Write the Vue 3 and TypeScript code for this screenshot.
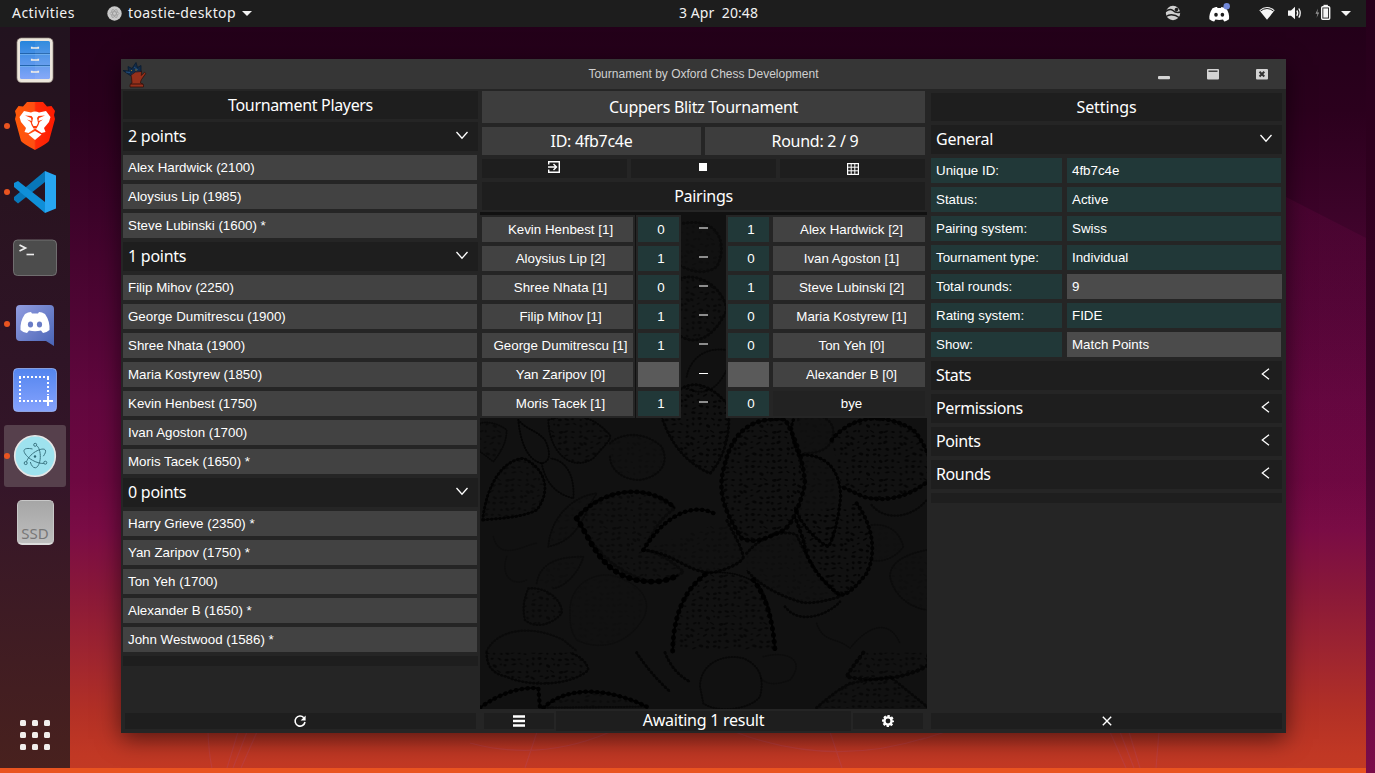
<script setup lang="ts">
interface Group { title: string; players: string[] }
interface Pairing { white: string; ws: string; bs: string; black: string; open?: boolean; bye?: boolean }
interface Setting { label: string; value: string; kind?: string }

const groups: Group[] = [
  { title: '2 points', players: ['Alex Hardwick (2100)', 'Aloysius Lip (1985)', 'Steve Lubinski (1600) *'] },
  {
    title: '1 points',
    players: ['Filip Mihov (2250)', 'George Dumitrescu (1900)', 'Shree Nhata (1900)', 'Maria Kostyrew (1850)', 'Kevin Henbest (1750)', 'Ivan Agoston (1700)', 'Moris Tacek (1650) *'],
  },
  {
    title: '0 points',
    players: ['Harry Grieve (2350) *', 'Yan Zaripov (1750) *', 'Ton Yeh (1700)', 'Alexander B (1650) *', 'John Westwood (1586) *'],
  },
]

const pairings: Pairing[] = [
  { white: 'Kevin Henbest [1]', ws: '0', bs: '1', black: 'Alex Hardwick [2]' },
  { white: 'Aloysius Lip [2]', ws: '1', bs: '0', black: 'Ivan Agoston [1]' },
  { white: 'Shree Nhata [1]', ws: '0', bs: '1', black: 'Steve Lubinski [2]' },
  { white: 'Filip Mihov [1]', ws: '1', bs: '0', black: 'Maria Kostyrew [1]' },
  { white: 'George Dumitrescu [1]', ws: '1', bs: '0', black: 'Ton Yeh [0]' },
  { white: 'Yan Zaripov [0]', ws: '', bs: '', black: 'Alexander B [0]', open: true },
  { white: 'Moris Tacek [1]', ws: '1', bs: '0', black: 'bye', bye: true },
]

const settings: Setting[] = [
  { label: 'Unique ID:', value: '4fb7c4e' },
  { label: 'Status:', value: 'Active' },
  { label: 'Pairing system:', value: 'Swiss' },
  { label: 'Tournament type:', value: 'Individual' },
  { label: 'Total rounds:', value: '9', kind: 'edit wide' },
  { label: 'Rating system:', value: 'FIDE' },
  { label: 'Show:', value: 'Match Points', kind: 'edit' },
]

const sections: string[] = ['Stats', 'Permissions', 'Points', 'Rounds']

// Leaf outlines of the board wallpaper: d, edge weight, opacity, texture inside
interface Leaf { d: string; w: number; o: number; tex?: number }
const leaves: Leaf[] = [
  { d: 'M38 330 C50 220 100 150 160 145 C235 180 240 250 200 300 C150 325 80 325 38 330', w: 9, o: 0.8, tex: 0.5 },
  { d: 'M145 30 C150 90 170 150 215 160 C245 155 240 120 225 90 C200 60 170 60 145 30', w: 6, o: 0.7 },
  { d: 'M215 160 C225 210 250 250 310 265 C315 200 290 150 240 145', w: 6, o: 0.6 },
  { d: 'M235 30 C235 120 300 190 370 145 C400 110 425 90 420 75 C380 30 330 0 235 30', w: 6, o: 0.6, tex: 0.9 },
  { d: 'M30 40 C60 30 100 50 110 60 C110 100 90 130 70 155 C50 140 40 130 20 120', w: 5, o: 0.5, tex: 0.7 },
  { d: 'M420 100 C450 70 520 60 575 110 C600 160 570 200 510 210 C460 210 420 180 420 140', w: 7, o: 0.45, tex: 0.3 },
  { d: 'M575 20 C600 100 650 160 720 190 C760 150 790 60 770 -20 C700 -100 620 -100 575 20', w: 9, o: 0.7, tex: 1 },
  { d: 'M320 325 C400 230 540 220 615 295 C560 330 540 390 520 420 C580 430 610 460 640 485 C600 515 560 515 530 512 C430 480 380 430 320 325', w: 10, o: 0.4, tex: 1 },
  { d: 'M320 325 C400 230 540 220 615 295', w: 14, o: 0.85 },
  { d: 'M320 325 C370 400 400 520 560 515 Q600 510 625 495', w: 17, o: 0.95 },
  { d: 'M520 420 C600 290 690 285 735 312', w: 13, o: 0.95 },
  { d: 'M520 420 C620 430 650 490 730 487 C790 475 820 450 820 440 C810 400 790 370 770 330', w: 10, o: 0.75, tex: 0.3 },
  { d: 'M235 410 C240 330 300 260 380 250 C340 310 330 390 235 410', w: 6, o: 0.4, tex: 0.3 },
  { d: 'M815 385 C760 300 740 240 765 160 C790 60 850 20 945 28 C975 80 1000 150 1005 220 C990 290 960 360 930 365 C880 390 850 400 815 385', w: 14, o: 0.85, tex: 0.85 },
  { d: 'M970 30 Q955 60 985 135 C1060 130 1110 170 1112 260 C1105 330 1090 390 1075 410 C1030 390 980 320 975 290', w: 10, o: 0.85, tex: 0.25 },
  { d: 'M1085 90 C1150 10 1250 10 1330 60 C1350 80 1370 120 1400 190 C1330 260 1250 280 1180 260 L1115 230', w: 13, o: 0.85, tex: 0.8 },
  { d: 'M985 30 C975 0 1080 0 1090 60 C1090 110 1060 130 1000 130', w: 8, o: 0.4, tex: 0.25 },
  { d: 'M1160 280 C1210 350 1220 430 1190 490 C1150 540 1130 555 1110 555 C1050 510 1010 460 1000 390 L975 320', w: 12, o: 0.85, tex: 0.9 },
  { d: 'M830 430 C880 370 950 360 980 375 C1010 440 1040 500 1110 560 C1060 575 1030 580 1000 578 C930 560 860 520 830 480', w: 9, o: 0.7, tex: 0.2 },
  { d: 'M945 590 C990 650 1080 610 1110 575', w: 8, o: 0.7 },
  { d: 'M608 723 C610 620 640 540 710 490 M850 510 C890 560 910 640 915 723', w: 15, o: 0.9 },
  { d: 'M608 723 C610 620 640 540 710 490 C780 480 840 500 870 530 C900 580 910 640 915 723', w: 5, o: 0.7, tex: 0.8 },
  { d: 'M1205 285 C1240 330 1320 330 1370 270', w: 7, o: 0.5 },
  { d: 'M1205 345 C1260 340 1290 370 1300 410 C1280 440 1240 460 1200 450', w: 6, o: 0.3, tex: 0.2 },
  { d: 'M1370 420 C1320 430 1260 450 1260 500 C1270 550 1310 590 1370 600', w: 6, o: 0.35, tex: 0.3 },
  { d: 'M175 535 C240 530 280 580 275 610 C250 640 200 660 165 630 C155 590 165 560 175 535', w: 7, o: 0.5, tex: 0.8 },
  { d: 'M300 600 C300 520 380 480 440 500 C530 530 550 590 510 640 C460 710 380 720 320 690 C300 660 300 640 300 600', w: 5, o: 0.22, tex: 0.3 },
  { d: 'M70 380 C90 460 170 400 200 400 M110 440 C90 500 130 530 170 510', w: 5, o: 0.2 },
  { d: 'M200 520 C210 460 260 440 340 440 C330 480 290 530 250 535', w: 6, o: 0.35, tex: 0.3 },
  { d: 'M50 723 C80 660 180 640 280 690 L320 723', w: 7, o: 0.4 },
  { d: 'M1040 640 C1060 700 1100 680 1140 715 C1200 640 1260 630 1290 700', w: 5, o: 0.3 },
  { d: 'M50 728 C50 760 60 790 110 800 C170 830 300 830 355 780 C350 750 320 735 300 728', w: 8, o: 0.6, tex: 1 },
  { d: 'M30 893 C90 850 150 830 205 835 L210 893 M220 893 C300 820 430 840 530 890', w: 13, o: 0.9 },
  { d: 'M225 893 C300 820 430 840 530 890 L225 893', w: 6, o: 0.5, tex: 0.6 },
  { d: 'M500 728 Q540 790 600 845 M585 728 Q610 790 660 815', w: 9, o: 0.7 },
  { d: 'M690 830 C690 760 760 730 820 745 C880 770 880 820 870 860 C840 900 740 910 700 880 Z', w: 6, o: 0.5 },
  { d: 'M880 740 C950 720 1010 750 960 810 C910 830 880 820 870 800', w: 5, o: 0.25 },
  { d: 'M1180 728 Q1140 780 1130 800 C1220 820 1320 800 1375 765 L1375 728', w: 12, o: 0.7, tex: 0.7 },
  { d: 'M1040 893 Q1100 840 1140 820 L1260 800 L1375 893', w: 9, o: 0.55, tex: 0.9 },
  { d: 'M640 -560 C760 -580 770 -480 740 -430 C700 -400 650 -420 620 -440', w: 9, o: 0.4, tex: 0.4 },
  { d: 'M620 -390 C680 -420 760 -370 770 -300 C740 -230 680 -180 620 -230', w: 9, o: 0.5, tex: 0.9 },
  { d: 'M650 -100 C660 -150 700 -190 770 -180 M660 -60 C720 -40 750 -80 770 -120', w: 6, o: 0.5 },
]

let seed = 7
const rnd = (): number => {
  seed = (seed * 16807) % 2147483647
  return seed / 2147483647
}
const specks = Array.from({ length: 64 }, (_, i) => ({
  x: (i % 8) * 20 + 5 + rnd() * 10,
  y: Math.floor(i / 8) * 18 + 5 + rnd() * 8,
  rx: 3 + rnd() * 4.5,
  ry: 2 + rnd() * 2.6,
  a: Math.round(rnd() * 80 - 40),
}))
</script>

<template>
  <div class="desktop">
    <svg class="wallpaper" width="1375" height="773" viewBox="0 0 1375 773">
      <defs><linearGradient id="hill" x2="0" y2="1"><stop stop-color="#8a0a55" stop-opacity=".16" /><stop offset="1" stop-color="#8a0a55" stop-opacity="0" /></linearGradient></defs>
      <path d="M1286 197L1366 238V540H1286Z" fill="url(#hill)" />
      <g fill="none" stroke="#b8475a" stroke-opacity=".4" stroke-width="1.2">
        <path d="M208 732Q209 755 212 768M238 732L227 768M247 732L233 768M257 732L241 768" />
        <path d="M470 743Q540 762 610 732M537 732L525 768M735 732Q830 768 925 738M830 732L842 768M920 740L945 732" />
        <path d="M1110 732L1126 768M1120 732L1134 768M1129 732L1140 768M1159 732L1156 768" />
      </g>
    </svg>

    <header class="topbar">
      <span class="activities">Activities</span>
      <svg class="appdot" width="15" height="15" viewBox="0 0 15 15">
        <circle cx="7.5" cy="7.5" r="7.2" fill="#c9c9c9" />
        <g fill="none" stroke="#999" stroke-width=".7"><ellipse cx="7.5" cy="7.5" rx="4.5" ry="1.8" /><ellipse cx="7.5" cy="7.5" rx="4.5" ry="1.8" transform="rotate(60 7.5 7.5)" /><ellipse cx="7.5" cy="7.5" rx="4.5" ry="1.8" transform="rotate(120 7.5 7.5)" /></g>
      </svg>
      <span class="appname">toastie-desktop</span>
      <i class="tri apptri"></i>
      <span class="clock">3 Apr&nbsp; 20:48</span>
      <svg class="tray" width="200" height="27" viewBox="1160 0 200 27">
        <circle cx="1173" cy="13" r="7.2" fill="#cfcfcf" />
        <path d="M1165.600 11.500Q1170 8 1173 10.500Q1176 13.500 1180.500 12M1166 16.500Q1172 12.500 1180 18" fill="none" stroke="#1d1d1d" stroke-width="1.500" />
        <circle cx="1176.500" cy="9.600" r="1.800" fill="#1d1d1d" />
        <path d="M1212.500 8.200C1214.500 7.300 1216 7 1217 6.900L1217.600 7.900H1220.800L1221.400 6.900C1223 7 1224.500 7.500 1226 8.200C1228.500 11.500 1229.500 15.500 1229 19.300C1227.500 20.600 1225.700 21.300 1224.200 21.500L1223 19.500Q1219.200 20.400 1215.400 19.500L1214.200 21.500C1212.500 21.200 1210.900 20.600 1209.400 19.300C1209 15.500 1210 11.600 1212.500 8.200Z" fill="#fff" />
        <ellipse cx="1216" cy="14.800" rx="1.800" ry="2" fill="#1d1d1d" /><ellipse cx="1222.400" cy="14.800" rx="1.800" ry="2" fill="#1d1d1d" />
        <circle cx="1226.700" cy="6.200" r="3.200" fill="#7289da" />
        <path d="M1259.300 10.300Q1267 3.900 1274.700 10.300L1267 19.800Z" fill="#f5f5f5" />
        <path d="M1260.500 11Q1267 6 1273.500 11" fill="none" stroke="#1d1d1d" stroke-width="1" />
        <path d="M1288 10.500H1291L1295 6.800V19.300L1291 15.800H1288Z" fill="#f5f5f5" />
        <path d="M1296.800 10.500Q1298.600 13 1296.800 15.800M1298.800 8.500Q1301.700 13 1298.800 17.700" fill="none" stroke="#f5f5f5" stroke-width="1.300" />
        <path d="M1318 8.500L1315.500 13.800H1317.500L1316.500 18L1319.200 12.500H1317.300Z" fill="#999" />
        <rect x="1321.700" y="6.700" width="8" height="12.600" rx="1" fill="none" stroke="#f5f5f5" stroke-width="1.400" />
        <rect x="1323.300" y="8.400" width="4.800" height="9.200" fill="#f5f5f5" /><rect x="1323.500" y="4.800" width="4.400" height="1.600" fill="#f5f5f5" />
        <path d="M1341 11H1351L1346 16Z" fill="#f5f5f5" />
      </svg>
    </header>

    <nav class="dock">
      <div class="slot">
        <svg width="44" height="50" viewBox="0 0 44 50">
          <defs><linearGradient id="files" x2="0" y2="1"><stop stop-color="#2685dc" /><stop offset="1" stop-color="#80a4f8" /></linearGradient></defs>
          <rect x="4" y="3" width="36" height="44.500" rx="4.500" fill="#ece6dc" stroke="#91877d" stroke-width=".7" />
          <rect x="7" y="6" width="30" height="38" rx="1.500" fill="url(#files)" />
          <path d="M7 18.500H37M7 30.500H37" stroke="#1a5da8" stroke-width="1" /><path d="M7 19.400H37M7 31.400H37" stroke="#75b3ef" stroke-width=".8" />
          <path d="M22 6H37V44H22Z" fill="#fff" opacity=".06" />
          <path d="M18.700 11.800V13H25.300V11.800M18.700 23.800V25H25.300V23.800M18.700 35.800V37H25.300V35.800" fill="none" stroke="#f4eee6" stroke-width="1.600" />
        </svg>
      </div>
      <div class="slot"><i class="run"></i>
        <svg width="44" height="50" viewBox="0 0 44 50">
          <defs><linearGradient id="brave"><stop stop-color="#ff5a08" /><stop offset=".48" stop-color="#ff4f12" /><stop offset=".52" stop-color="#ff2b08" /><stop offset="1" stop-color="#ff1a00" /></linearGradient></defs>
          <path d="M14 1H30L34 5.500L38.500 5L42 10L41 14L42 18L36 40Q35 42 22 49Q9 42 8 40L2 18L3 14L2 10L5.500 5L10 5.500Z" fill="url(#brave)" />
          <path d="M6.500 16L11 10L18 11.500Q22 9.500 26 11.500L33 10L37.500 16L36 21L31 27L32.500 31L28.500 32L22 27.500L15.500 32L11.500 31L13 27L8 21Z" fill="#fff" />
          <path d="M15.500 33.500L22 30L28.500 33.500L22 39Z" fill="#fff" />
          <path d="M12 14.500L18.500 15L20 17L19 22L20.500 25H23.500L25 22L24 17L25.500 15L32 14.500L26 17L25.500 20L30 18.500L26.500 21L25.500 24L23.500 27.500H20.500L18.500 24L17.500 21L14 18.500L18.500 20L18 17Z" fill="#ff3b0a" />
        </svg>
      </div>
      <div class="slot"><i class="run"></i>
        <svg width="44" height="50" viewBox="0 0 44 50">
          <path d="M1 33L5 36.500L32 15V4L1 30Z" fill="#0877b9" /><path d="M1 16L5 14L32 35V46L1 20Z" fill="#0f8fd8" /><path d="M32 4L43 8.500V41.500L32 46Z" fill="#27a6f2" />
        </svg>
      </div>
      <div class="slot">
        <svg width="44" height="50" viewBox="0 0 44 50"><rect x=".5" y="7" width="43" height="35.500" rx="4" fill="#4c4c4c" stroke="#7d7d7d" stroke-width=".8" /><path d="M6.500 12L12.500 15L6.500 18" fill="none" stroke="#eee" stroke-width="1.700" /><path d="M13.500 21.500H21" stroke="#eee" stroke-width="1.600" /></svg>
      </div>
      <div class="slot"><i class="run"></i>
        <svg width="44" height="50" viewBox="0 0 44 50">
          <defs><linearGradient id="disc" x2="1" y2="1"><stop stop-color="#929de0" /><stop offset="1" stop-color="#4964b6" /></linearGradient></defs>
          <path d="M7 6H37Q41 6 41 10V47L33 42H7Q3 42 3 38V10Q3 6 7 6Z" fill="url(#disc)" />
          <path d="M12 15Q15 13 18 13L19 14.500H25L26 13Q29 13 32 15Q37 22 36.500 31Q33 34 30 34L28 31.500Q22 33 16 31.500L14 34Q10 33.500 7.500 31Q7 22 12 15Z" fill="#fff" />
          <ellipse cx="17.500" cy="25.500" rx="2.600" ry="3" fill="#697cc6" /><ellipse cx="26.500" cy="25.500" rx="2.600" ry="3" fill="#697cc6" />
        </svg>
      </div>
      <div class="slot">
        <svg width="44" height="50" viewBox="0 0 44 50">
          <defs><linearGradient id="shot" x2="0" y2="1"><stop stop-color="#5385ef" /><stop offset="1" stop-color="#86a3fd" /></linearGradient></defs>
          <rect x=".5" y="3.500" width="43" height="43" rx="4" fill="url(#shot)" stroke="#a5c0ff" stroke-width=".7" />
          <path d="M6 12H36.500M7 12V37M6 36H31M35 13V30" fill="none" stroke="#fff" stroke-width="2" stroke-dasharray="2 2" /><path d="M30 36H40M35 31V41" stroke="#fff" stroke-width="2" />
        </svg>
      </div>
      <div class="slot active"><i class="run"></i>
        <svg width="44" height="50" viewBox="0 0 44 50">
          <circle cx="22" cy="25" r="20.300" fill="#9ee2ee" stroke="#e6e6e6" stroke-width="1.600" />
          <g fill="none" stroke="#3a7582" stroke-width="1">
            <path d="M23.500 14.500C26 16 27.500 21 27.300 26.500C27 32 25 36.500 22.300 36.800C20 36.800 18.300 34.500 17.300 31" />
            <path d="M13.500 30.800C14.500 27.500 18 23.300 22.500 20.600C27 18 31 17.300 32.300 19C33.200 20.500 32 23 30.300 25.200" />
            <path d="M19.500 18C15 17 11.500 17.300 11 19.500C10.700 22 14.500 26.500 19.500 29.300C24 31.800 28.500 32.800 31 32.300" />
            <circle cx="22.200" cy="13.800" r="1.500" /><circle cx="12.700" cy="32.100" r="1.500" /><circle cx="32.300" cy="31.700" r="1.500" />
          </g>
          <circle cx="22" cy="25.500" r="1.200" fill="#2c6674" />
        </svg>
      </div>
      <div class="slot"><div class="ssd">SSD</div></div>
      <div class="grid9"><i v-for="n in 9" :key="n"></i></div>
    </nav>

    <section class="window">
      <div class="titlebar">
        <svg class="logo" width="26" height="28" viewBox="0 0 26 28">
          <path d="M8 12.500Q14 8 19.500 11L19.300 15.500L22.500 12.300L23.800 13.500L19.500 19.500Q18.500 21 18.500 23L21.500 24.500V27H8V24.500L10 23Q10 17 8 12.500Z" fill="#96301b" stroke="#32100b" stroke-width=".8" />
          <path d="M8.500 24H21" stroke="#3a130e" />
          <path d="M1 10.500L6.500 11L6 6.500L10 8.500L14 2.500L15.500 7.500L19 5.500L19 11.500Q13 10.500 8.500 15.500L6 14Z" fill="#122b48" stroke="#081a30" stroke-width=".8" /><path d="M4 12L8 12.500M12 7L16 10" stroke="#25598f" stroke-width=".8" /><circle cx="14" cy="10" r=".7" fill="#a8862a" /><circle cx="9.500" cy="10.500" r=".6" fill="#a8862a" />
        </svg>
        <span class="wtitle">Tournament by Oxford Chess Development</span>
        <svg class="controls" width="120" height="30" viewBox="0 0 120 30">
          <rect x="6" y="17" width="12" height="3.200" rx="1" fill="#d4d4d4" />
          <rect x="55" y="10" width="12" height="10.500" rx="1" fill="#d4d4d4" /><rect x="56.500" y="11.500" width="9" height="1.500" fill="#454545" />
          <rect x="104" y="10" width="12" height="10.500" rx="1" fill="#d4d4d4" /><path d="M107.500 12.800L112.300 17.500M112.300 12.800L107.500 17.500" stroke="#333" stroke-width="2" />
        </svg>
      </div>

      <div class="columns">
        <aside class="players">
          <h2 class="head">Tournament Players</h2>
          <div v-for="g in groups" :key="g.title" class="group">
            <div class="bar"><span>{{ g.title }}</span><svg width="12" height="9" viewBox="0 0 12 9"><path d="M.5 1L6 7.300L11.500 1" /></svg></div>
            <div v-for="p in g.players" :key="p" class="cell row">{{ p }}</div>
          </div>
          <div class="strip"></div>
          <button class="foot" type="button">
            <svg width="14" height="14" viewBox="0 0 14 14"><path d="M10.800 3.700A5 5 0 1 0 12 8" fill="none" stroke="#fff" stroke-width="1.600" /><path d="M12.600 1.500V6.500H7.600Z" fill="#fff" /></svg>
          </button>
        </aside>

        <main class="board">
          <div class="tops">
            <div class="gray title">Cuppers Blitz Tournament</div>
            <div class="pair2"><div class="gray">ID: 4fb7c4e</div><div class="gray">Round: 2 / 9</div></div>
            <div class="tools">
              <button type="button"><svg width="14" height="14" viewBox="0 0 14 14"><path d="M1.700 4.500V1.700H12.300V12.300H1.700V9.500" fill="none" stroke="#fff" stroke-width="1.400" /><path d="M1 7H9.500M6.500 4L9.500 7L6.500 10" fill="none" stroke="#fff" stroke-width="1.400" /></svg></button>
              <button type="button"><i class="stop"></i></button>
              <button class="last" type="button"><svg class="tbl" width="12" height="12" viewBox="0 0 12 12"><rect x=".6" y=".6" width="10.800" height="10.800" fill="none" stroke="#fff" stroke-width="1.200" /><path d="M4.200 0V12M7.800 0V12M0 4.200H12M0 7.800H12" stroke="#fff" stroke-width="1" /></svg></button>
            </div>
            <div class="dark">Pairings</div>
          </div>
          <div class="field">
            <svg class="leaves" width="447" height="497" viewBox="0 0 447 497">
              <defs>
                <pattern id="specks" width="160" height="144" patternUnits="userSpaceOnUse">
                  <ellipse v-for="(s, i) in specks" :key="i" :cx="s.x" :cy="s.y" :rx="s.rx" :ry="s.ry" :transform="`rotate(${s.a} ${s.x} ${s.y})`" fill="#000" />
                </pattern>
              </defs>
              <g transform="translate(-10 198) scale(.33333)">
                <g v-for="(l, i) in leaves" :key="i" :opacity="l.o">
                  <path v-if="l.tex" :d="l.d" fill="url(#specks)" :opacity="l.tex" />
                  <path :d="l.d" fill="none" stroke="#000" :stroke-width="l.w * 0.35" />
                  <path :d="l.d" fill="none" stroke="#000" :stroke-width="l.w" stroke-linecap="round" :stroke-dasharray="`1 ${l.w * 1.25}`" />
                </g>
              </g>
            </svg>
            <div class="table">
              <div v-for="p in pairings" :key="p.white" class="match">
                <div class="side l"><div class="cell name">{{ p.white }}</div></div>
                <div class="side s"><div class="score" :class="{ open: p.open }">{{ p.ws }}</div></div>
                <div class="dash" :class="{ on: p.open }"><i></i></div>
                <div class="side s"><div class="score" :class="{ open: p.open }">{{ p.bs }}</div></div>
                <div class="side r"><div class="cell name" :class="{ bye: p.bye }">{{ p.black }}</div></div>
              </div>
            </div>
          </div>
          <div class="status">
            <button type="button"><svg width="12" height="12" viewBox="0 0 12 12"><path d="M0 1.500H12M0 6H12M0 10.500H12" stroke="#fff" stroke-width="2.600" /></svg></button>
            <div class="await">Awaiting 1 result</div>
            <button type="button"><svg width="12" height="12" viewBox="0 0 12 12"><circle cx="6" cy="6" r="3.600" fill="none" stroke="#fff" stroke-width="2.400" /><circle cx="6" cy="6" r="5" fill="none" stroke="#fff" stroke-width="2" stroke-dasharray="2.300 1.627" stroke-dashoffset="1.150" /></svg></button>
          </div>
        </main>

        <aside class="settings">
          <h2 class="head">Settings</h2>
          <div class="bar"><span>General</span><svg width="12" height="9" viewBox="0 0 12 9"><path d="M.5 1L6 7.300L11.500 1" /></svg></div>
          <div v-for="s in settings" :key="s.label" class="setting">
            <div class="teal">{{ s.label }}</div><div class="teal value" :class="s.kind">{{ s.value }}</div>
          </div>
          <div class="closed">
            <div v-for="s in sections" :key="s" class="bar"><span>{{ s }}</span><svg class="left" width="9" height="12" viewBox="0 0 9 12"><path d="M8 .7L1.300 6L8 11.300" /></svg></div>
          </div>
          <div class="strip"></div>
          <button class="foot" type="button"><svg width="10" height="10" viewBox="0 0 10 10"><path d="M.8 .8L9.200 9.200M9.200 .8L.8 9.200" stroke="#fff" stroke-width="1.400" /></svg></button>
        </aside>
      </div>
    </section>
    <div class="nextright"></div>
    <div class="nextbottom"></div>
  </div>
</template>

<style>
body { margin: 0; background: #1d1d1d; }
</style>

<style scoped>
* { box-sizing: border-box; }
.desktop {
  position: relative; width: 1375px; height: 773px; overflow: hidden; color: #fff;
  font-family: "Noto Sans", "Open Sans", sans-serif;
  background: linear-gradient(180deg, #230019 27px, #2b001d 110px, #3c0329 210px, #4f0534 310px, #62073e 400px, #6d0841 480px, #7a0c45 530px, #891839 590px, #a0262f 660px, #b23026 710px, #c13824 755px, #c23a24 773px);
}
.wallpaper { position: absolute; inset: 0; }
button { border: 0; padding: 0; margin: 0; background: #1e1e1e; display: flex; align-items: center; justify-content: center; }
i { display: block; font-style: normal; }

.topbar { position: relative; width: 1366px; height: 27px; background: #1d1d1d; display: flex; align-items: center; font-size: 14px; padding-left: 12px; color: #f2f2f2; }
.topbar span { line-height: 25px; height: 27px; }
.activities { width: 95px; letter-spacing: .45px; }
.appdot { margin-right: 6px; }
.appname { width: 114px; white-space: nowrap; letter-spacing: .4px; }
.tri { border: 5px solid transparent; border-top-color: #f2f2f2; border-bottom: 0; }
.clock { position: absolute; left: 679px; white-space: nowrap; letter-spacing: .08px; }
.tray { position: absolute; left: 1160px; top: 0; }

.dock { position: absolute; left: 0; top: 27px; width: 70px; height: 741px; background: linear-gradient(180deg, #22131f, #28131f 20%, #2f1426 45%, #351629 62%, #3c1a25 75%, #48211e); padding: 2px 4px 0; }
.slot { position: relative; height: 62px; margin-bottom: 4px; display: flex; align-items: center; justify-content: center; border-radius: 3px; }
.slot.active { background: #56404c; }
.run { position: absolute; left: 0; top: 28px; width: 6px; height: 6px; border-radius: 50%; background: #e95420; }
.ssd { width: 37px; height: 45px; border-radius: 5px; background: linear-gradient(#a6a6a6, #bebebe); border: 1px solid #c8c8c8; border-bottom: 2px solid #ddd; color: #777; font-size: 15px; line-height: 64px; text-align: center; }
.grid9 { position: absolute; left: 20px; top: 693px; display: grid; grid-template-columns: repeat(3, 6px); gap: 6px; }
.grid9 i { width: 6px; height: 6px; border-radius: 1.500px; background: #f1eeec; }

.window { position: absolute; left: 121px; top: 59px; width: 1165px; height: 674px; background: #252525; box-shadow: 0 6px 22px rgba(0, 0, 0, .55); }
.titlebar { height: 30px; background: #363636; position: relative; display: flex; align-items: center; justify-content: center; font: 12px "Liberation Sans", Arial, sans-serif; color: #d0d0d0; }
.logo { position: absolute; left: 1px; top: 1px; }
.controls { position: absolute; left: 1031px; top: 0; }
.columns { display: grid; grid-template-columns: 359px 447px 1fr; height: 644px; }

.head, .dark, .gray { margin: 0; height: 28px; background: #1e1e1e; text-align: center; font-size: 16px; font-weight: 400; line-height: 28px; letter-spacing: -.28px; }
.bar { height: 29px; margin-bottom: 4px; background: #1e1e1e; display: flex; align-items: center; justify-content: space-between; padding: 0 10px 0 5px; font-size: 16px; line-height: 29px; letter-spacing: -.25px; }
.bar svg { fill: none; stroke: #fff; stroke-width: 1.300; margin-top: -3px; }
.cell, .teal, .score { height: 25px; background: #424242; font: 13.333px/25px "Liberation Sans", Arial, sans-serif; white-space: nowrap; }
.players { padding: 2px 2px 4px; display: flex; flex-direction: column; width: 359px; }
.players .head { margin: 0 0 3px; width: 355px; letter-spacing: -.33px; }
.players .bar { width: 355px; }
.row { width: 354px; padding-left: 5px; margin-bottom: 4px; }
.strip { height: 10px; width: 355px; background: #1e1e1e; }
.foot { margin-top: auto; height: 16px; }
.players .foot { width: 351px; margin-left: 2px; padding-right: 2px; }

.board { display: flex; flex-direction: column; }
.tops { padding: 2px; display: flex; flex-direction: column; gap: 4px; height: 123px; }
.gray { background: #3d3d3d; }
.gray.title { height: 32px; line-height: 32px; }
.pair2 { display: grid; grid-template-columns: 219px 220px; gap: 4px; }
.tools { display: grid; grid-template-columns: repeat(3, 145px); gap: 4px; height: 19px; }
.tools button { padding: 0 2px 3px 0; }
.tools .last { padding-right: 0; }
.stop { width: 8px; height: 8px; background: #fff; }
.tbl { margin-top: 4px; }
.field { position: relative; height: 497px; background: #111; }
.leaves { position: absolute; inset: 0; }
.table { position: relative; padding-top: 3px; }
.match { display: grid; grid-template-columns: 155px 1px 45px 45px 45px 156px; height: 29px; }
.match > :nth-child(2) { grid-column: 3; }
.side { background: #252525; padding: 2px; }
.name { text-align: center; padding-left: 6px; }
.side.r .name { padding-left: 5px; }
.name.bye { background: #222; }
.score { width: 41px; background: #213838; text-align: center; padding-left: 5px; }
.score.open { background: #5a5a5a; }
.dash i { margin: 12px 0 0 18px; width: 9px; height: 2px; background: #8d8d8d; }
.dash.on i { margin-top: 13px; height: 1px; background: #fff; }
.status { flex: 1; display: grid; grid-template-columns: 70px 295px 70px; gap: 2px; padding: 2px 4px; }
.status button { height: 16px; margin-top: 2px; }
.await { background: #1e1e1e; height: 20px; font-size: 16px; line-height: 18px; text-align: center; letter-spacing: -.25px; }

.settings { padding: 4px; display: flex; flex-direction: column; }
.settings .head { width: 351px; margin-bottom: 4px; letter-spacing: -.12px; }
.settings .bar, .settings .strip, .settings .foot { width: 351px; }
.closed .bar { letter-spacing: -.38px; }
.left { margin-right: 2px; }
.setting { display: grid; grid-template-columns: 131px 214px; gap: 5px; margin-bottom: 4px; }
.teal { background: #213838; padding-left: 5px; }
.value.edit { background: #4b4b4b; }
.value.wide { width: 215px; }
.nextright { position: absolute; left: 1366px; top: 0; width: 9px; height: 773px; background: linear-gradient(#26001b, #30001f 25%, #3b0327 50%, #5b073b 75%, #7b0b49); }
.nextbottom { position: absolute; left: 0; top: 768px; width: 1366px; height: 5px; background: #e95420; }
</style>
